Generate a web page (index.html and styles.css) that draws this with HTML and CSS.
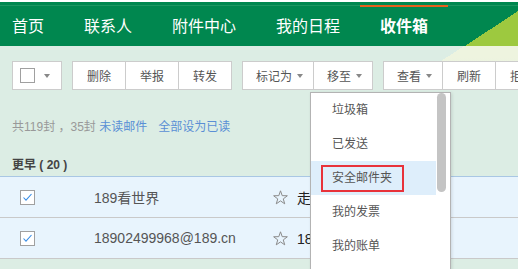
FILE: index.html
```html
<!DOCTYPE html>
<html lang="zh-CN">
<head>
    <meta charset="UTF-8">
    <title>收件箱</title>
    <link rel="stylesheet" href="styles.css">
</head>
<body>
    <header class="topbar">
        <nav class="tabs">
            <a class="tab">首页</a>
            <a class="tab">联系人</a>
            <a class="tab">附件中心</a>
            <a class="tab">我的日程</a>
            <a class="tab active">收件箱</a>
        </nav>
    </header>

    <main class="mailbox">
        <div class="toolbar">
            <div class="btn-group">
                <span class="btn select-btn"><span class="checkbox"></span><span class="caret"></span></span>
            </div>
            <div class="btn-group">
                <span class="btn">删除</span>
                <span class="btn">举报</span>
                <span class="btn">转发</span>
            </div>
            <div class="btn-group">
                <span class="btn has-caret">标记为<span class="caret"></span></span>
                <span class="btn has-caret">移至<span class="caret"></span></span>
            </div>
            <div class="btn-group">
                <span class="btn has-caret">查看<span class="caret"></span></span>
                <span class="btn">刷新</span>
                <span class="btn">拒收</span>
            </div>
        </div>

        <p class="summary">共119封 ，35封 <a class="link">未读邮件</a><a class="link read-all">全部设为已读</a></p>

        <h3 class="group-title">更早 ( 20 )</h3>
        <ul class="mail-list">
            <li class="mail-row">
                <span class="checkbox checked"><svg width="13" height="13" viewBox="0 0 13 13"><path d="M2.5 6.5 L5 9.2 L10.5 3" fill="none" stroke="#3a8ee6" stroke-width="1.1"/></svg></span>
                <span class="sender">189看世界</span>
                <svg class="star" width="15" height="15" viewBox="0 0 15 15"><polygon points="7.5,0.8 9.2,5.65 14.35,5.78 10.26,8.9 11.73,13.82 7.5,10.9 3.27,13.82 4.74,8.9 0.65,5.78 5.8,5.65" fill="none" stroke="#8a8a8a"/></svg>
                <span class="subject">走进189</span>
            </li>
            <li class="mail-row">
                <span class="checkbox checked"><svg width="13" height="13" viewBox="0 0 13 13"><path d="M2.5 6.5 L5 9.2 L10.5 3" fill="none" stroke="#3a8ee6" stroke-width="1.1"/></svg></span>
                <span class="sender">18902499968@189.cn</span>
                <svg class="star" width="15" height="15" viewBox="0 0 15 15"><polygon points="7.5,0.8 9.2,5.65 14.35,5.78 10.26,8.9 11.73,13.82 7.5,10.9 3.27,13.82 4.74,8.9 0.65,5.78 5.8,5.65" fill="none" stroke="#8a8a8a"/></svg>
                <span class="subject">189邮箱</span>
            </li>
        </ul>

        <!-- 移至 dropdown -->
        <div class="dropdown">
            <ul class="menu">
                <li class="menu-item">垃圾箱</li>
                <li class="menu-item">已发送</li>
                <li class="menu-item current">安全邮件夹<span class="mark"></span></li>
                <li class="menu-item">我的发票</li>
                <li class="menu-item">我的账单</li>
            </ul>
            <span class="scroll-thumb"></span>
        </div>
    </main>
</body>
</html>
```

FILE: styles.css
```css
html, body {
    margin: 0;
    padding: 0;
    overflow: hidden;
}
body {
    font-family: "Liberation Sans", "Noto Sans CJK SC", sans-serif;
    background-color: #dcede4;
    color: #555;
}
ul {
    list-style: none;
    margin: 0;
    padding: 0;
}

/* top navigation */
.topbar {
    height: 44px;
    border-top: 2px solid #fff;
    background:
        linear-gradient(to top left, #9dc93f 50%, transparent 50%) no-repeat right bottom / 53px 35px,
        linear-gradient(#1d9562, #1d9562) no-repeat 0 3px / 100% 1px,
        #00874f;
}
.tabs {
    display: flex;
}
.tab {
    margin-top: 3px;
    padding: 0 20px;
    border-top: 2px solid transparent;
    line-height: 39px;
    font-size: 16px;
    color: #fff;
    white-space: nowrap;
}
.tab:first-child {
    padding-left: 12px;
}
.tab.active {
    border-top-color: #e4601c;
    font-weight: bold;
}

/* mailbox area */
.mailbox {
    position: relative;
    height: 223px;
    background:
        linear-gradient(rgba(220, 237, 228, 0) 12px, #dcede4 40px) no-repeat 0 0 / 100% 40px,
        linear-gradient(to bottom right, transparent 50%, #eef4df 50%) no-repeat 403px 0 / 61px 40px,
        linear-gradient(#eef4df, #eef4df) no-repeat 464px 0 / 54px 40px;
}

.toolbar {
    display: flex;
    gap: 10px;
    padding: 15px 0 0 12px;
    white-space: nowrap;
}
.btn-group {
    display: flex;
    flex-shrink: 0;
    border: 1px solid #ccc;
    background: #fff;
}
.btn {
    display: flex;
    align-items: center;
    height: 27px;
    padding: 0 14px;
    font-size: 12px;
    color: #555;
}
.btn + .btn {
    border-left: 1px solid #ccc;
}
.btn.has-caret {
    gap: 5px;
    padding: 0 10px 0 13px;
}
.select-btn {
    gap: 9px;
    padding: 0 11px 0 7px;
}
.caret {
    width: 0;
    height: 0;
    border-top: 4px solid #888;
    border-left: 3.5px solid transparent;
    border-right: 3.5px solid transparent;
}
.checkbox {
    display: block;
    width: 13px;
    height: 13px;
    border: 1px solid #a0a0a0;
    background: #fff;
    flex-shrink: 0;
}
.checkbox svg {
    display: block;
}

.summary {
    margin: 28px 0 0;
    padding-left: 12px;
    font-size: 12px;
    line-height: 18px;
    color: #999;
}
.link {
    color: #5a8fd5;
}
.read-all {
    margin-left: 11px;
}

.group-title {
    margin: 20px 0 0;
    padding: 0 0 2px 12px;
    border-bottom: 1px solid #a9c7e4;
    font-size: 12px;
    line-height: 18px;
    color: #444;
}

.mail-row {
    display: flex;
    align-items: center;
    height: 40px;
    padding-left: 20px;
    border-bottom: 1px solid #c9c9c9;
    background: #e8f4fd;
    white-space: nowrap;
}
.sender {
    width: 179px;
    margin-left: 59px;
    font-size: 14px;
    color: #555;
}
.star {
    flex-shrink: 0;
}
.subject {
    margin-left: 9px;
    font-size: 14px;
    color: #222;
}

/* dropdown of 移至 */
.dropdown {
    position: absolute;
    left: 310px;
    top: 46px;
    width: 139px;
    height: 210px;
    border: 1px solid #b3b3b3;
    background: #fff;
    box-shadow: 1px 1px 3px rgba(0, 0, 0, 0.12);
}
.menu {
    width: 125px;
}
.menu-item {
    position: relative;
    height: 34px;
    padding-left: 21px;
    line-height: 34px;
    font-size: 12px;
    color: #555;
}
.menu-item.current {
    background: #deeefb;
}
.mark {
    position: absolute;
    left: 10px;
    top: 4px;
    width: 83px;
    height: 27px;
    box-sizing: border-box;
    border: 2px solid #e8323a;
}
.scroll-thumb {
    position: absolute;
    right: 4px;
    top: 0;
    width: 9px;
    height: 99px;
    border-radius: 5px;
    background: #c4c4c4;
}
```
